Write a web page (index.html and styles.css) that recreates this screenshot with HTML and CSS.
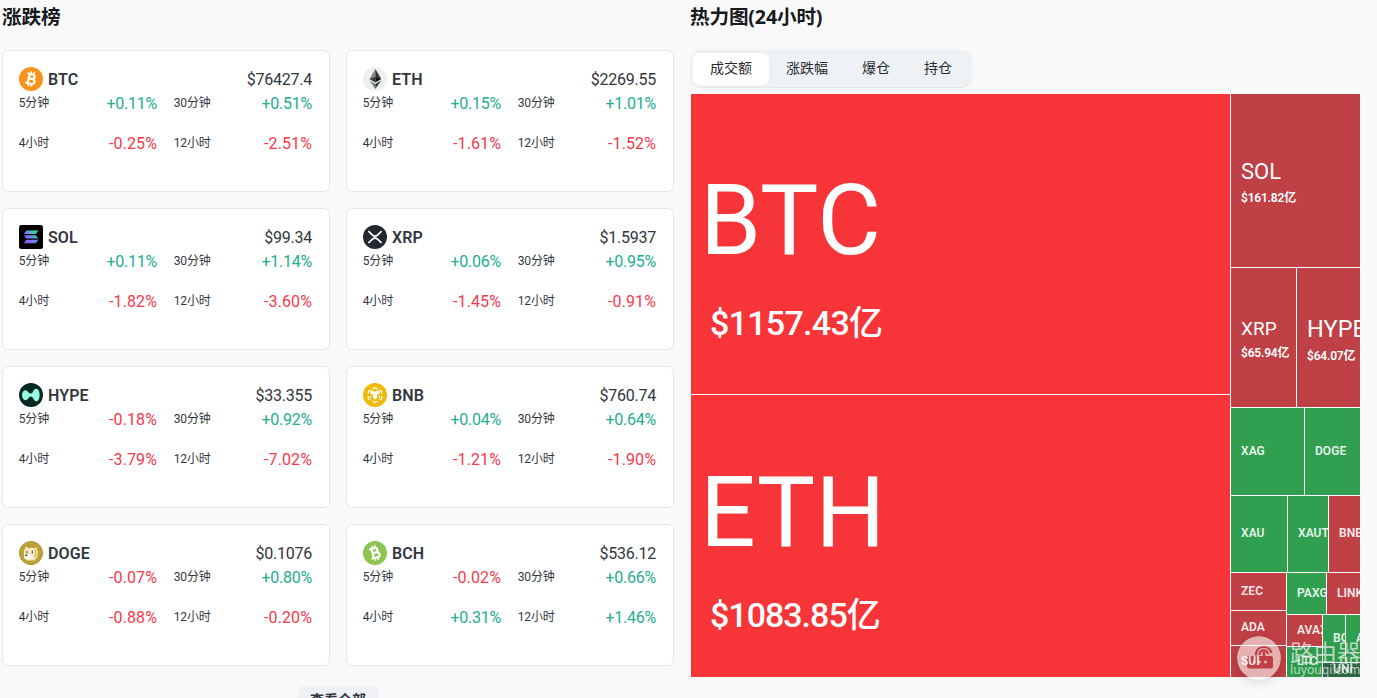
FILE: index.html
```html
<!DOCTYPE html>
<html lang="zh-CN">
<head>
<meta charset="utf-8">
<title>涨跌榜</title>
<link rel="stylesheet" href="styles.css">
</head>
<body>
<main class="page">
  <section class="rank">
    <h2 class="title">涨跌榜</h2>
    <div class="cards">
      <article class="card">
        <header class="head"><svg class="icon" viewBox="0 0 24 24"><circle cx="12" cy="12" r="12" fill="#f7931a"/><g transform="rotate(13 12 12) translate(-1.6 -1.2) scale(1.1)" fill="none" stroke="#fff" stroke-width="2"><path d="M8 7.6H13.2a2.05 2.05 0 0 1 0 4.1H10.2M10.2 7.6V16.3M13.2 11.8h.6a2.2 2.2 0 0 1 0 4.5H8"/><path stroke-width="1.3" d="M11.2 5v2.5M13.8 5v2.5M11.2 16.5V19M13.8 16.5V19"/></g></svg><b class="name">BTC</b><span class="price">$76427.4</span></header>
        <dl class="stats"><div><dt>5分钟</dt><dd class="up">+0.11%</dd></div><div><dt>30分钟</dt><dd class="up">+0.51%</dd></div><div><dt>4小时</dt><dd class="down">-0.25%</dd></div><div><dt>12小时</dt><dd class="down">-2.51%</dd></div></dl>
      </article>
      <article class="card">
        <header class="head"><svg class="icon" viewBox="0 0 24 24"><circle cx="12" cy="12" r="12" fill="#ecf0f1"/><path d="M12.3 2 6.4 12.1l5.9-2.6z" fill="#888"/><path d="M12.3 2v7.5l6 2.6z" fill="#333"/><path d="m6.4 12.1 5.9-2.6v6z" fill="#3c3c3c"/><path d="m12.3 9.5 6 2.6-6 3.4z" fill="#111"/><path d="m6.4 13.6 5.9 3.3V22z" fill="#858585"/><path d="m12.3 16.9 6-3.3-6 8.4z" fill="#3b3b3b"/></svg><b class="name">ETH</b><span class="price">$2269.55</span></header>
        <dl class="stats"><div><dt>5分钟</dt><dd class="up">+0.15%</dd></div><div><dt>30分钟</dt><dd class="up">+1.01%</dd></div><div><dt>4小时</dt><dd class="down">-1.61%</dd></div><div><dt>12小时</dt><dd class="down">-1.52%</dd></div></dl>
      </article>
      <article class="card">
        <header class="head"><svg class="icon" viewBox="0 0 24 24"><defs><linearGradient id="sol" gradientUnits="userSpaceOnUse" x1="5" y1="18" x2="18" y2="5"><stop stop-color="#9945ff"/><stop offset=".45" stop-color="#7a7bee"/><stop offset="1" stop-color="#19fb9b"/></linearGradient></defs><rect width="24" height="24" rx="2.5"/><path fill="url(#sol)" d="M7.4 5.6H19.3L16.8 9H4.8zM4.8 10.2H16.8L19.3 13.6H7.4zM7.4 14.8H19.3L16.8 18.2H4.8z"/></svg><b class="name">SOL</b><span class="price">$99.34</span></header>
        <dl class="stats"><div><dt>5分钟</dt><dd class="up">+0.11%</dd></div><div><dt>30分钟</dt><dd class="up">+1.14%</dd></div><div><dt>4小时</dt><dd class="down">-1.82%</dd></div><div><dt>12小时</dt><dd class="down">-3.60%</dd></div></dl>
      </article>
      <article class="card">
        <header class="head"><svg class="icon" viewBox="0 0 24 24"><circle cx="12" cy="12" r="12" fill="#23292f"/><path d="M5.4 6.2 9.2 9.9q2.8 2.6 5.6 0L18.6 6.2M5.4 18 9.2 14.3q2.8-2.6 5.6 0L18.6 18" fill="none" stroke="#fff" stroke-width="1.7"/></svg><b class="name">XRP</b><span class="price">$1.5937</span></header>
        <dl class="stats"><div><dt>5分钟</dt><dd class="up">+0.06%</dd></div><div><dt>30分钟</dt><dd class="up">+0.95%</dd></div><div><dt>4小时</dt><dd class="down">-1.45%</dd></div><div><dt>12小时</dt><dd class="down">-0.91%</dd></div></dl>
      </article>
      <article class="card">
        <header class="head"><svg class="icon" viewBox="0 0 24 24"><circle cx="12" cy="12" r="12" fill="#072723"/><path fill="#97fce4" d="M3 12C3 9 4.7 7.2 6.5 7.2c2.2 0 3 3.3 5.4 3.3 2.5 0 2.3-4.7 5.1-4.7 2.2 0 3.6 2.6 3.6 6.2s-1.2 6.3-3.3 6.3c-2.8 0-2.9-4.7-5.4-4.7-2.3 0-2.9 3.6-5.2 3.6C4.6 17.2 3 15 3 12z"/></svg><b class="name">HYPE</b><span class="price">$33.355</span></header>
        <dl class="stats"><div><dt>5分钟</dt><dd class="down">-0.18%</dd></div><div><dt>30分钟</dt><dd class="up">+0.92%</dd></div><div><dt>4小时</dt><dd class="down">-3.79%</dd></div><div><dt>12小时</dt><dd class="down">-7.02%</dd></div></dl>
      </article>
      <article class="card">
        <header class="head"><svg class="icon" viewBox="0 0 24 24"><circle cx="12" cy="12" r="12" fill="#f0b90b"/><g fill="none" stroke="#fff" stroke-width="1.3"><path d="M9.4 6 12 4.5 14.6 6M16.6 7.1l2 1.2v2.4M18.6 13v2.7l-2.2 1.3M14.4 18.2 12 19.6l-2.4-1.4M7.6 17l-2.2-1.3V13M5.4 10.7V8.3l2-1.2"/></g><path fill="#fff" d="m7.5 8.3 1.8-1.1L12 8.8l2.7-1.6 1.8 1.1v2.2l-2.6 1.6v3.1L12 16.3l-1.9-1.2V12L7.5 10.5z"/><path d="M7.6 13v1.7M16.4 13v1.7" stroke="#fff" stroke-width="1.3"/></svg><b class="name">BNB</b><span class="price">$760.74</span></header>
        <dl class="stats"><div><dt>5分钟</dt><dd class="up">+0.04%</dd></div><div><dt>30分钟</dt><dd class="up">+0.64%</dd></div><div><dt>4小时</dt><dd class="down">-1.21%</dd></div><div><dt>12小时</dt><dd class="down">-1.90%</dd></div></dl>
      </article>
      <article class="card">
        <header class="head"><svg class="icon" viewBox="0 0 24 24"><circle cx="12" cy="12" r="11.6" fill="#bda135" stroke="#a68d35" stroke-width=".8"/><path fill="#f5ebc8" d="M5.2 17.5 4.8 10.5 7 5.2 9.3 7.3q3.5-1 6.5 0L17.2 6 18.7 10.5 18.6 16 15.5 19.3 8.5 19.5z"/><path fill="#dcc679" d="M15.5 8.5 17.5 8 18 15.5 15.5 18z"/><ellipse cx="9" cy="15.5" rx="3.6" ry="2.8" fill="#fffdf4"/><path d="M8 10v2.5M13.3 9.5v3" stroke="#5b4a25" stroke-width="1.1"/><path d="M6.3 14.3h2" stroke="#33291a" stroke-width="1.3"/></svg><b class="name">DOGE</b><span class="price">$0.1076</span></header>
        <dl class="stats"><div><dt>5分钟</dt><dd class="down">-0.07%</dd></div><div><dt>30分钟</dt><dd class="up">+0.80%</dd></div><div><dt>4小时</dt><dd class="down">-0.88%</dd></div><div><dt>12小时</dt><dd class="down">-0.20%</dd></div></dl>
      </article>
      <article class="card">
        <header class="head"><svg class="icon" viewBox="0 0 24 24"><circle cx="12" cy="12" r="12" fill="#8dc351"/><g transform="rotate(-14 12 12) translate(-1.6 -1.2) scale(1.1)" fill="none" stroke="#fff" stroke-width="2"><path d="M8 7.6H13.2a2.05 2.05 0 0 1 0 4.1H10.2M10.2 7.6V16.3M13.2 11.8h.6a2.2 2.2 0 0 1 0 4.5H8"/><path stroke-width="1.3" d="M11.2 5v2.5M13.8 5v2.5M11.2 16.5V19M13.8 16.5V19"/></g></svg><b class="name">BCH</b><span class="price">$536.12</span></header>
        <dl class="stats"><div><dt>5分钟</dt><dd class="down">-0.02%</dd></div><div><dt>30分钟</dt><dd class="up">+0.66%</dd></div><div><dt>4小时</dt><dd class="up">+0.31%</dd></div><div><dt>12小时</dt><dd class="up">+1.46%</dd></div></dl>
      </article>
    </div>
    <button class="more">查看全部</button>
  </section>

  <section class="heat">
    <h2 class="title">热力图(24小时)</h2>
    <nav class="tabs"><a class="tab active">成交额</a><a class="tab">涨跌幅</a><a class="tab">爆仓</a><a class="tab">持仓</a></nav>
    <div class="map">
      <div class="col majors">
        <div class="tile hot huge btc"><span>BTC</span><em>$1157.43亿</em></div>
        <div class="tile hot huge eth"><span>ETH</span><em>$1083.85亿</em></div>
      </div>
      <div class="col minors">
        <div class="tile red big sol"><span>SOL</span><em>$161.82亿</em></div>
        <div class="row r1"><div class="tile red big xrp"><span>XRP</span><em>$65.94亿</em></div><div class="tile red big hype"><span>HYPE</span><em>$64.07亿</em></div></div>
        <div class="row r2"><div class="tile green xag">XAG</div><div class="tile green">DOGE</div></div>
        <div class="row r3"><div class="tile green xau">XAU</div><div class="tile green xaut">XAUT</div><div class="tile red">BNB</div></div>
        <div class="row r4">
          <div class="col tail-a"><div class="tile red zec">ZEC</div><div class="tile red ada">ADA</div><div class="tile red">SUI</div></div>
          <div class="col tail-b">
            <div class="row r5"><div class="tile green paxg">PAXG</div><div class="tile red">LINK</div></div>
            <div class="row r6">
              <div class="col tail-c"><div class="tile red avax">AVAX</div><div class="tile green">LTC</div></div>
              <div class="col tail-d"><div class="row r7"><div class="tile green bch">BCH</div><div class="tile green">A</div></div><div class="tile dark">UNI</div></div>
            </div>
          </div>
        </div>
      </div>
    </div>
  </section>
</main>
<aside class="mark">
  <svg class="mark-logo" viewBox="0 0 44 44"><defs><mask id="lock"><circle cx="22" cy="22" r="22" fill="#fff"/><g fill="none" stroke="#000" stroke-width="2.2"><path d="M19 19.5V17a8 8 0 0 1 15.500 0"/><path d="M22.5 19v-1a4.300 4.300 0 0 1 8.500 0"/></g><path d="M25.700 15.500h2.600V20h-2.600z"/><rect x="10" y="20" width="26" height="12.500" rx="2"/><g fill="#fff"><circle cx="17" cy="26" r="1.500"/><circle cx="22.500" cy="26" r="1.500"/><circle cx="28.500" cy="26" r="1.500"/></g></mask></defs><rect width="44" height="44" fill="#fff" fill-opacity=".6" mask="url(#lock)"/></svg>
  <div class="mark-text"><span class="mark-cn">路由器</span><span class="mark-url">luyouqi.com</span></div>
</aside>
</body>
</html>
```
FILE: styles.css
```css
* { box-sizing: border-box; }
body {
  margin: 0;
  width: 1377px;
  height: 698px;
  overflow: hidden;
  background: #f9f9f9;
  color: #32363e;
  font-family: Roboto, "Noto Sans CJK SC", sans-serif;
}
.page { display: flex; gap: 16px; height: 698px; padding-left: 2px; overflow: hidden; }
.rank { width: 672px; flex: none; display: flex; flex-direction: column; align-items: center; }
.heat { width: 671px; flex: none; }
.title {
  flex: none;
  align-self: flex-start;
  margin: 0;
  height: 50px;
  font: 700 19.6px/34px "Noto Sans", "Noto Sans CJK SC", sans-serif;
  letter-spacing: -.15px;
  color: #17191c;
}
.cards { flex: none; display: grid; grid-template-columns: 328px 328px; gap: 16px; }
.card { height: 142px; padding: 16px; border: 1px solid #e6e6e6; border-radius: 6px; background: #fff; }
.head { display: flex; align-items: center; height: 24px; font-size: 16px; line-height: 24px; }
.icon { width: 24px; height: 24px; margin-right: 5px; }
.name { padding-top: 2px; font-weight: 600; letter-spacing: .1px; }
.price { margin-left: auto; padding: 2px 1px 0 0; letter-spacing: -.25px; }
.stats { display: grid; grid-template-columns: 1fr 1fr; gap: 16px; margin: 0; }
.stats div { display: flex; justify-content: space-between; height: 24px; }
.stats dt { font-size: 12px; line-height: 24px; letter-spacing: -.15px; margin-left: -.3px; }
.stats dd { margin: 0; padding-right: 1px; font-size: 16px; line-height: 26px; }
.up { color: #24ae8f; letter-spacing: -.25px; }
.down { color: #f6394c; letter-spacing: .1px; }
.more {
  flex: none;
  width: 80px;
  height: 32px;
  margin-top: 20px;
  padding: 0 0 6px;
  border: 0;
  border-radius: 6px;
  background: #eef2f6;
  color: #32363e;
  font: 700 14px/26px "Noto Sans CJK SC", sans-serif;
}
.tabs {
  display: flex;
  width: 282px;
  height: 38px;
  margin-bottom: 6px;
  padding: 3px;
  border-radius: 10px;
  background: #eef2f5;
  border-bottom: 1px solid #e2e6e9;
}
.tab { height: 32px; padding: 0 17px; border-radius: 6px; font: 14px/28px "Noto Sans CJK SC", sans-serif; color: #26292e; }
.tab.active { background: #fff; }

.map { display: flex; gap: 1px; width: 669px; height: 583px; margin-left: 1px; background: #fff; }
.col { display: flex; flex-direction: column; gap: 1px; }
.row { display: flex; gap: 1px; }
.majors { width: 539px; }
.minors { width: 129px; overflow: hidden; }
.tile {
  flex: 1 1 0;
  min-width: 0;
  min-height: 0;
  display: flex;
  align-items: center;
  padding: 0 0 2px 10px;
  overflow: hidden;
  color: rgba(255, 255, 255, .9);
  font-size: 12px;
  line-height: 14px;
  font-weight: 600;
  letter-spacing: .05px;
  white-space: nowrap;
}
.tile em { font-style: normal; }
.hot { background: #f73538; }
.red { background: #bf4045; }
.green { background: #309f4f; }
.dark { background: #306b49; }
.huge { flex-direction: column; align-items: flex-start; justify-content: center; padding: 26px 0 0 9px; color: #fff; font-weight: 400; }
.huge span { font-size: 98px; line-height: 100px; letter-spacing: .2px; }
.huge em { margin: 32px 0 0 10px; font-size: 34px; line-height: 40px; font-weight: 500; letter-spacing: -.7px; }
.eth em { letter-spacing: -1px; }
.big { flex-direction: column; align-items: flex-start; justify-content: center; color: #fff; padding-bottom: 0; }
.btc { flex: 0 0 300px; }
.big span { font-weight: 400; font-size: 22px; line-height: 26px; }
.big em { margin-top: 6px; letter-spacing: -.2px; }
.sol { flex: 0 0 173px; padding-top: 3px; }
.r1 { height: 139px; }
.xrp { flex: 0 0 65px; }
.xrp span { font-size: 19px; }
.xrp em { margin-top: 4px; }
.hype { padding-top: 4px; }
.hype span { font-size: 23.5px; }
.hype em { margin-top: 7px; }
.r2 { height: 87px; }
.xag { flex: 0 0 73px; }
.r3 { height: 76px; }
.xau { flex: 0 0 56px; }
.xaut { flex: 0 0 40px; }
.r4 { height: 104px; }
.tail-a { width: 55px; }
.zec { flex: 0 0 37px; }
.ada { flex: 0 0 34px; }
.tail-b { width: 73px; }
.r5 { height: 41px; }
.paxg { flex: 0 0 39px; }
.r6 { height: 62px; }
.tail-c { width: 35px; }
.avax { flex: 0 0 31px; }
.tail-d { width: 37px; }
.r7 { height: 47px; }
.bch { flex: 0 0 22px; }

.mark { position: absolute; left: 1237px; top: 636px; display: flex; width: 140px; height: 50px; }
.mark-logo { flex: none; width: 44px; height: 44px; border-radius: 50%; box-shadow: 0 3px 12px rgba(0, 0, 0, .12); }
.mark-text { display: flex; flex-direction: column; margin-left: 9px; color: rgba(255, 255, 255, .66); text-shadow: 0 2px 5px rgba(0, 0, 0, .12); }
.mark-cn { font: 400 23.5px/32px "Noto Sans CJK SC", sans-serif; }
.mark-url { font: 12.2px/14px "Noto Sans", sans-serif; margin-top: -5px; }
```
